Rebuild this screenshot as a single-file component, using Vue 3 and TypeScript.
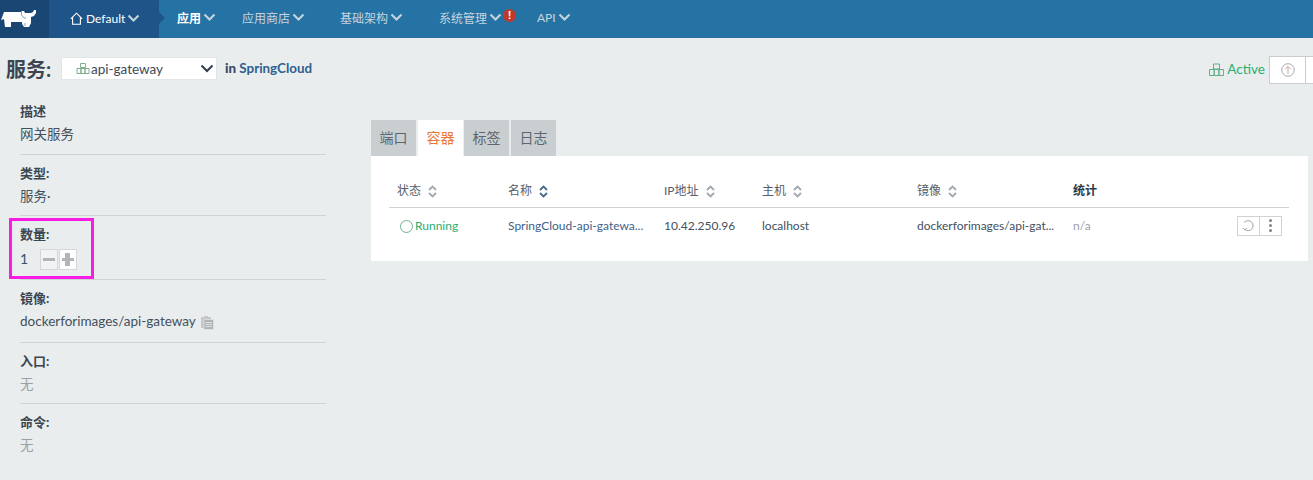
<script setup lang="ts">
interface Column {
  label: string
  sort: 'plain' | 'active' | 'none'
}

interface InfoBlock {
  label: string
  value: string
  muted?: boolean
}

const navItems = [
  { label: '应用', active: true, width: 65 },
  { label: '应用商店', width: 98 },
  { label: '基础架构', width: 99 },
  { label: '系统管理', width: 98, alert: true },
  { label: 'API', width: 60 },
]

const columns: Column[] = [
  { label: '状态', sort: 'plain' },
  { label: '名称', sort: 'active' },
  { label: 'IP地址', sort: 'plain' },
  { label: '主机', sort: 'plain' },
  { label: '镜像', sort: 'plain' },
  { label: '统计', sort: 'none' },
]

const tabs = ['端口', '容器', '标签', '日志']

const topBlocks: InfoBlock[] = [
  { label: '描述', value: '网关服务' },
  { label: '类型:', value: '服务·' },
]

const bottomBlocks: InfoBlock[] = [
  { label: '入口:', value: '无', muted: true },
  { label: '命令:', value: '无', muted: true },
]
</script>

<template>
  <div class="page">
    <header class="topbar">
      <div class="logo">
        <svg width="38" height="20" viewBox="0 0 38 20">
          <path class="cow" d="M4 3H21V2H24L25 4H31L33 3L34 1H36V4L34 7L31 8V14L29 18H24L22 15V13H11V18H5L4 10L1 11Z" />
          <path class="cow-line" d="M21.5 2V6L24 9H26M25 14V17" />
        </svg>
      </div>
      <div class="env">
        <svg class="home" width="13" height="13" viewBox="0 0 13 13">
          <path d="M0.8 6.8 6.5 1.2l5.7 5.6M2.6 5.6v6.6h7.8V5.6" />
        </svg>
        <span>Default</span>
        <svg class="chev" width="13" height="9" viewBox="0 0 13 9"><path d="M1.5 1.5 6.5 6.5l5-5" /></svg>
      </div>
      <nav class="nav">
        <div
          v-for="item in navItems"
          :key="item.label"
          class="nav-item"
          :class="{ active: item.active }"
          :style="{ width: item.width + 'px' }"
        >
          <span>{{ item.label }}</span>
          <svg class="chev" width="13" height="9" viewBox="0 0 13 9"><path d="M1.5 1.5 6.5 6.5l5-5" /></svg>
          <span v-if="item.alert" class="alert">!</span>
        </div>
      </nav>
    </header>

    <section class="titlebar">
      <h1>服务:</h1>
      <div class="select">
        <svg class="stack" width="14" height="13" viewBox="0 0 14 13">
          <path d="M4.5 1.5h5v4h-5zM1 6.5h4v5H1zM5 6.5h4v5H5zM9 6.5h4v5H9z" />
        </svg>
        <span class="select-text">api-gateway</span>
        <svg class="select-chev" width="14" height="9" viewBox="0 0 14 9"><path d="M1.5 1.5 7 7l5.5-5.5" /></svg>
      </div>
      <div class="stack-link"><b>in</b> <span>SpringCloud</span></div>
      <div class="state">
        <svg class="stack state-icon" width="15" height="14" viewBox="0 0 15 14">
          <path d="M4.5 1h6v5h-6zM0.5 6.5h4.7v6H0.5zM5.2 6.5h4.7v6H5.2zM9.9 6.5h4.7v6H9.9z" />
        </svg>
        <span>Active</span>
        <div class="state-btns">
          <button class="state-btn">
            <svg width="14" height="14" viewBox="0 0 14 14">
              <circle cx="7" cy="7" r="6.3" />
              <path class="up" d="M7 11V3.6M4.2 6.2 7 3.4l2.8 2.8" />
            </svg>
          </button>
          <button class="state-btn"></button>
        </div>
      </div>
    </section>

    <main class="content">
      <aside class="side">
        <div v-for="block in topBlocks" :key="block.label" class="info">
          <div class="info-label">{{ block.label }}</div>
          <div class="info-value">{{ block.value }}</div>
        </div>
        <div class="info info-scale">
          <span class="highlight"></span>
          <div class="info-label">数量:</div>
          <div class="scale-row">
            <span class="scale-num">1</span>
            <span class="scale-btn minus"><i></i></span>
            <span class="scale-btn plus"><i></i><i class="v"></i></span>
          </div>
        </div>
        <div class="info info-image">
          <div class="info-label">镜像:</div>
          <div class="info-value image">
            <span>dockerforimages/api-gateway</span>
            <svg class="copy" width="14" height="15" viewBox="0 0 14 15">
              <path class="copy-back" d="M1 2h3V1h4v1h3v11H1z" />
              <path class="copy-front" d="M4 4.5h9.5v10H4z" />
              <path class="copy-lines" d="M5.5 7.5h6.5M5.5 9.5h6.5M5.5 11.5h6.5" />
            </svg>
          </div>
        </div>
        <div v-for="block in bottomBlocks" :key="block.label" class="info">
          <div class="info-label">{{ block.label }}</div>
          <div class="info-value" :class="{ muted: block.muted }">{{ block.value }}</div>
        </div>
      </aside>

      <div class="detail">
        <ul class="tabs">
          <li v-for="tab in tabs" :key="tab" class="tab" :class="{ current: tab === '容器' }">{{ tab }}</li>
        </ul>
        <div class="panel">
          <table class="grid">
            <colgroup>
              <col style="width: 111px" />
              <col style="width: 156px" />
              <col style="width: 98px" />
              <col style="width: 155px" />
              <col style="width: 156px" />
              <col />
            </colgroup>
            <thead>
              <tr>
                <th v-for="col in columns" :key="col.label" :class="{ strong: col.sort === 'none' }">
                  <span>{{ col.label }}</span>
                  <svg
                    v-if="col.sort !== 'none'"
                    class="sort"
                    :class="{ on: col.sort === 'active' }"
                    width="9"
                    height="13"
                    viewBox="0 0 9 13"
                  >
                    <path d="M1 5 4.5 1.5 8 5M1 8l3.5 3.5L8 8" />
                  </svg>
                </th>
              </tr>
            </thead>
            <tbody>
              <tr>
                <td class="running"><i class="ring"></i>Running</td>
                <td class="name">SpringCloud-api-gatewa...</td>
                <td>10.42.250.96</td>
                <td>localhost</td>
                <td>dockerforimages/api-gat...</td>
                <td class="last">
                  <span class="na">n/a</span>
                  <span class="actions">
                    <button class="act">
                      <svg width="13" height="13" viewBox="0 0 13 13">
                        <path d="M3 10.6A5 5 0 1 0 2.2 3.5M1.2 9.2l1.8 1.6 1.8-1.6" />
                      </svg>
                    </button>
                    <button class="act dots"><i></i><i></i><i></i></button>
                  </span>
                </td>
              </tr>
            </tbody>
          </table>
        </div>
      </div>
    </main>
  </div>
</template>

<style>
html,
body {
  background: #e9edee;
}
</style>

<style scoped>
.page {
  width: 1313px;
  height: 480px;
  overflow: hidden;
  background: #e9edee;
  color: #3a4a58;
  font-family: Lato, "Noto Sans CJK SC", sans-serif;
  font-size: 13px;
}

.topbar {
  display: flex;
  height: 38px;
  background: #2572a4;
}

.logo {
  display: flex;
  align-items: center;
  width: 49px;
  box-sizing: border-box;
  background: #1a4673;
}

.cow {
  fill: #fff;
}

.cow-line {
  fill: none;
  stroke: #7f9fbd;
  stroke-width: 1;
}

.env {
  position: relative;
  display: flex;
  align-items: center;
  width: 110px;
  height: 38px;
  padding-left: 21px;
  padding-bottom: 1px;
  box-sizing: border-box;
  background: #1e5488;
  color: #fff;
  font-size: 12px;
}

.env::after {
  content: "";
  position: absolute;
  left: 100%;
  top: 12px;
  border-top: 6px solid transparent;
  border-bottom: 6px solid transparent;
  border-left: 6px solid #1e5488;
}

.home {
  margin-right: 3px;
}

.home path {
  fill: none;
  stroke: #fff;
  stroke-width: 1.1;
}

.chev {
  margin-left: 2px;
}

.chev path {
  fill: none;
  stroke: #c3d3de;
  stroke-width: 2.2;
}

.nav {
  display: flex;
  padding-left: 18px;
}

.nav-item {
  display: flex;
  align-items: center;
  height: 34px;
  color: #c6d5df;
  font-size: 12px;
}

.nav-item.active {
  color: #fff;
  font-weight: 700;
}

.alert {
  width: 13px;
  height: 13px;
  margin-left: 1px;
  margin-top: -4px;
  border-radius: 50%;
  background: #c0392b;
  color: #fff;
  font: 700 11px/13px "Liberation Sans", sans-serif;
  text-align: center;
}

.titlebar {
  display: flex;
  align-items: flex-start;
  height: 28px;
  margin-top: 18px;
  padding-left: 6px;
}

.titlebar h1 {
  margin: 0 12px 0 0;
  width: 43px;
  font-size: 20px;
  line-height: 26px;
  font-weight: 700;
  white-space: nowrap;
  color: #3c4650;
}

.select {
  display: flex;
  align-items: center;
  width: 156px;
  height: 23px;
  margin-top: 1px;
  padding-left: 14px;
  box-sizing: border-box;
  background: #fff;
  border: 1px solid #e2e6e8;
  color: #3c4a58;
  font-size: 13.5px;
}

.select-text {
  margin-left: 1px;
}

.select-chev {
  margin-left: auto;
  margin-right: 2px;
}

.select-chev path {
  fill: none;
  stroke: #2c3e50;
  stroke-width: 2;
}

.stack path {
  fill: none;
  stroke: #7eae8c;
  stroke-width: 1;
}

.stack-link {
  margin-left: 8px;
  margin-top: 3px;
  font-size: 13.4px;
  line-height: 18px;
  color: #2f5f8f;
  font-weight: 700;
}

.stack-link b {
  color: #3c4a68;
}

.state {
  display: flex;
  align-items: center;
  height: 28px;
  margin-left: auto;
  color: #27ae73;
  font-size: 13.5px;
}

.state > span {
  margin-top: -2px;
}

.state-icon {
  margin-right: 3px;
}

.state-icon path {
  stroke: #5fae87;
}

.state-btns {
  display: flex;
  margin-left: 4px;
  margin-right: -28px;
}

.state-btn {
  display: flex;
  align-items: center;
  justify-content: center;
  width: 37px;
  height: 28px;
  padding: 0;
  margin-right: -1px;
  background: #fff;
  border: 1px solid #c8cdd0;
}

.state-btn circle {
  fill: none;
  stroke: #a4a8b4;
}

.state-btn .up {
  fill: none;
  stroke: #c8a8a0;
}

.content {
  display: flex;
}

.side {
  width: 326px;
  padding-top: 9px;
  padding-left: 20px;
  box-sizing: border-box;
}

.info {
  position: relative;
  height: 61px;
  padding-top: 9px;
  box-sizing: border-box;
  border-bottom: 1px solid #cfd3d5;
}

.info:first-child {
  height: 62px;
}

.info:last-child {
  border-bottom: 0;
}

.info-scale {
  height: 64px;
}

.info-image {
  height: 63px;
}

.info-label {
  font-size: 13px;
  line-height: 18px;
  font-weight: 700;
  color: #3c4650;
}

.info-value {
  margin-top: 5px;
  font-size: 13.5px;
  line-height: 18px;
  color: #44505c;
}

.info-value.muted {
  color: #9aa0a6;
}

.image {
  display: flex;
  align-items: center;
}

.copy {
  margin-left: 4px;
  margin-top: 2px;
}

.copy-back {
  fill: #c4c8cb;
}

.copy-front {
  fill: #aeb3b6;
  stroke: #e9edee;
  stroke-width: 0.6;
}

.copy-lines {
  stroke: #dfe2e4;
  fill: none;
}

.highlight {
  position: absolute;
  left: -11px;
  top: 2px;
  width: 85px;
  height: 61px;
  box-sizing: border-box;
  border: 3px solid #f81ce5;
}

.scale-row {
  display: flex;
  align-items: center;
  margin-top: 6px;
}

.scale-num {
  width: 20px;
  margin-top: -2px;
  font-size: 14px;
  color: #34536f;
}

.scale-btn {
  position: relative;
  width: 18px;
  height: 21px;
  margin-right: 1px;
  box-sizing: border-box;
  border: 1px solid #d3d7d9;
  background: #f1f3f4;
}

.scale-btn.plus {
  background: #fff;
}

.scale-btn i {
  position: absolute;
  left: 2px;
  top: 8px;
  width: 12px;
  height: 3px;
  background: #b0b5b8;
}

.scale-btn i.v {
  left: 5px;
  top: 3px;
  width: 5px;
  height: 13px;
}

.detail {
  width: 937px;
  padding-top: 36px;
  padding-left: 45px;
}

.tabs {
  display: flex;
  gap: 1px;
  margin: 0;
  padding: 0;
  list-style: none;
}

.tab {
  width: 45px;
  height: 36px;
  background: #c9cfd1;
  color: #5c6670;
  font-size: 14px;
  line-height: 36px;
  text-align: center;
}

.tab:nth-child(2),
.tab:nth-child(4) {
  margin-left: 1px;
}

.tab.current {
  background: #fff;
  color: #e8773a;
}

.panel {
  height: 105px;
  padding: 17px 19px 0 18px;
  box-sizing: border-box;
  background: #fff;
}

.grid {
  width: 900px;
  table-layout: fixed;
  border-collapse: collapse;
}

.grid th {
  height: 34px;
  padding: 0 8px;
  box-sizing: border-box;
  border-bottom: 1px solid #cfd3d5;
  color: #55606c;
  font-size: 12px;
  font-weight: 400;
  text-align: left;
}

.grid th.strong {
  color: #2c3a46;
  font-weight: 700;
}

.sort {
  margin-left: 7px;
  vertical-align: -3px;
}

.sort path {
  fill: none;
  stroke: #a0a8b0;
  stroke-width: 1.8;
}

.sort.on path {
  stroke: #4a6a8c;
}

.grid td {
  height: 36px;
  padding: 0 8px;
  box-sizing: border-box;
  font-size: 12px;
  color: #44505c;
  white-space: nowrap;
}

.running {
  color: #27ae73 !important;
}

.ring {
  display: inline-block;
  width: 13px;
  height: 13px;
  margin: 0 2px 0 3px;
  box-sizing: border-box;
  border: 1px solid #6ab58a;
  border-radius: 50%;
  vertical-align: -3px;
}

.name {
  color: #3f5f88 !important;
}

.last {
  display: flex;
  align-items: center;
  justify-content: space-between;
  padding-right: 7px !important;
}

.na {
  color: #9aa0a6;
}

.actions {
  display: flex;
}

.act {
  display: flex;
  align-items: center;
  justify-content: center;
  width: 23px;
  height: 20px;
  padding: 0;
  background: #fff;
  border: 1px solid #cfd3d5;
}

.act + .act {
  margin-left: -1px;
}

.act svg path {
  fill: none;
  stroke: #9aa0a6;
}

.dots {
  flex-direction: column;
  gap: 2px;
}

.dots i {
  width: 3px;
  height: 3px;
  border-radius: 50%;
  background: #7c848c;
}
</style>
